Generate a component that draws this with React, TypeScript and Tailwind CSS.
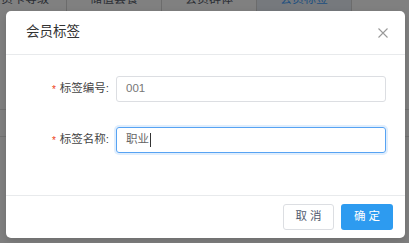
import React from "react";

const font = { fontFamily: '"Liberation Sans", "Noto Sans CJK SC", sans-serif' };

export default function App() {
  const tabs = ["会员卡等级", "储值套餐", "会员群体", "会员标签"];
  return (
    <div className="relative w-[409px] h-[243px] overflow-hidden bg-[#808080]" style={font}>
      {/* background page */}
      <div className="flex flex-col">
        <div className="flex -mt-[14px] h-[25px]">
          {tabs.map((t, i) => (
            <div
              key={t}
              className={
                "shrink-0 w-[95px] flex items-center justify-center border-r border-[#6c6c6c] text-[12px] " +
                (i === 0 ? "-ml-[28px] " : "") +
                (i === 3 ? "bg-[#76797d] text-[#1c4f80]" : "text-[#2a2d33]")
              }
            >
              {t}
            </div>
          ))}
        </div>
        <div className="mt-[98px] border-t border-[#727272]" />
        <div className="mt-[26px] border-t border-[#727272]" />
      </div>

      {/* modal */}
      <div className="absolute left-[6px] top-[11px] w-[399px] h-[227px] bg-white rounded-[5px] flex flex-col shadow-[0_3px_8px_rgba(0,0,0,0.15)]">
        <div className="h-[44px] shrink-0 flex items-center justify-between pl-[20px] pr-[17px] border-b border-[#e8eaec]">
          <span className="text-[13.5px] text-[#333]">会员标签</span>
          <svg width="10" height="10" viewBox="0 0 10 10" className="block">
            <path d="M0.5 0.5 L9.5 9.5 M9.5 0.5 L0.5 9.5" stroke="#999" strokeWidth="1.1" fill="none" />
          </svg>
        </div>

        <div className="flex-1 flex flex-col pt-[21px] gap-[25px]">
          <div className="flex items-center h-[26px]">
            <div className="w-[110px] shrink-0 flex items-center justify-end pr-[7px] text-[11.5px] text-[#444]">
              <span className="text-[#ed4014] mr-[4px] text-[10px]">*</span>
              <span>标签编号:</span>
            </div>
            <div className="w-[270px] h-[26px] border border-[#dcdee2] rounded-[3px] flex items-center pl-[9px] text-[11.5px] text-[#777]">
              001
            </div>
          </div>
          <div className="flex items-center h-[26px]">
            <div className="w-[110px] shrink-0 flex items-center justify-end pr-[7px] text-[11.5px] text-[#444]">
              <span className="text-[#ed4014] mr-[4px] text-[10px]">*</span>
              <span>标签名称:</span>
            </div>
            <div className="w-[270px] h-[26px] border border-[#57a3f3] rounded-[3px] flex items-center pl-[9px] text-[11.5px] text-[#666] shadow-[0_0_0_2px_rgba(45,140,240,0.15)]">
              <span>职业</span>
              <span className="inline-block w-[1px] h-[14px] bg-[#333] ml-[1px]" />
            </div>
          </div>
        </div>

        <div className="h-[43px] shrink-0 border-t border-[#e8eaec] flex items-start justify-end pt-[8px] pr-[12px] gap-[7px]">
          <button className="w-[51px] h-[26px] border border-[#dcdee2] rounded-[3px] bg-white text-[11.5px] text-[#515a6e] tracking-[3px] pl-[3px]">
            取消
          </button>
          <button className="w-[52px] h-[26px] rounded-[3px] bg-[#2d9bf0] text-[11.5px] text-white tracking-[3px] pl-[3px]">
            确定
          </button>
        </div>
      </div>
    </div>
  );
}
